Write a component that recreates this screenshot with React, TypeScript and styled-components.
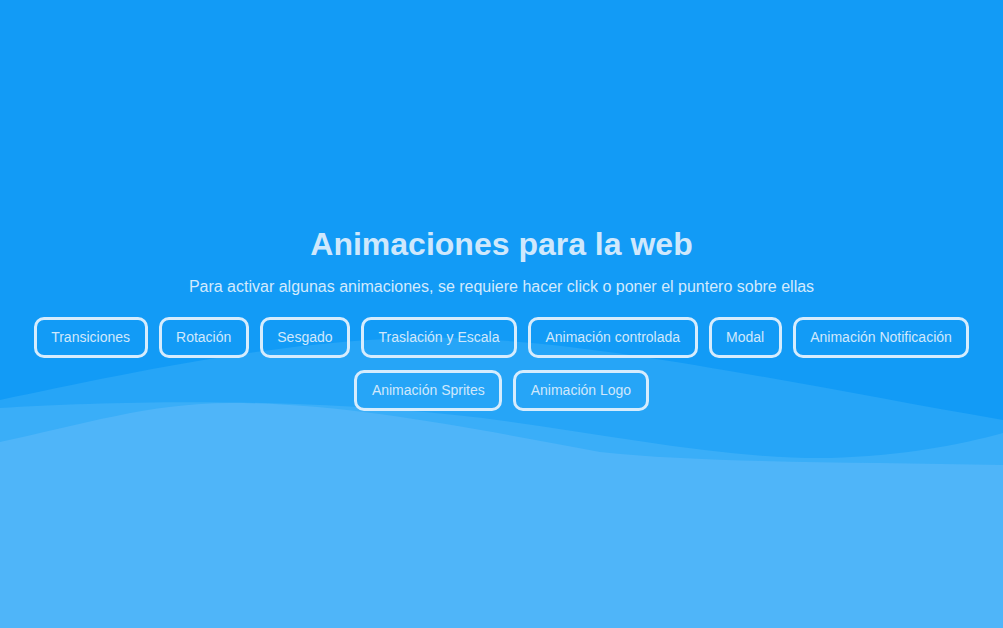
import React from "react";
import styled, { createGlobalStyle } from "styled-components";

const GlobalStyle = createGlobalStyle`
  html, body {
    margin: 0;
    padding: 0;
  }
  body {
    background: #129bf6;
    font-family: "Liberation Sans", Arial, sans-serif;
  }
  * { box-sizing: border-box; }
`;

const Page = styled.main`
  position: relative;
  min-height: 100vh;
  overflow: hidden;
  background: #129bf6;
  display: flex;
  flex-direction: column;
  justify-content: center;
  align-items: center;
  padding-top: 8px;
`;

const Waves = styled.svg`
  position: absolute;
  inset: 0;
  width: 100%;
  height: 100%;
  z-index: 0;
`;

const Content = styled.section`
  position: relative;
  z-index: 1;
  display: flex;
  flex-direction: column;
  align-items: center;
  width: 100%;
`;

const Title = styled.h1`
  margin: 0;
  font-size: 32px;
  line-height: 37px;
  font-weight: 700;
  color: #cfe8fc;
`;

const Subtitle = styled.p`
  margin: 15px 0 0;
  font-size: 16px;
  line-height: 18px;
  color: #d3eafd;
`;

const ButtonRow = styled.nav`
  margin-top: 21px;
  display: flex;
  flex-wrap: wrap;
  justify-content: center;
  column-gap: 11px;
  row-gap: 12px;
  max-width: 1003px;
`;

const NavButton = styled.button`
  font-family: "Liberation Sans", Arial, sans-serif;
  font-size: 14px;
  line-height: 15px;
  height: 41px;
  padding: 10px 14.5px;
  color: #d0e8fc;
  background: transparent;
  border: 3px solid #d6ecfd;
  border-radius: 10px;
  cursor: pointer;
  white-space: nowrap;
`;

const items = [
  "Transiciones",
  "Rotación",
  "Sesgado",
  "Traslación y Escala",
  "Animación controlada",
  "Modal",
  "Animación Notificación",
  "Animación Sprites",
  "Animación Logo",
];

export default function App() {
  return (
    <>
      <GlobalStyle />
      <Page>
        <Waves viewBox="0 0 1003 628" preserveAspectRatio="none" aria-hidden="true">
          <path
            d="M0,400 C120,375 300,335 450,338 C600,341 800,385 1003,420 L1003,628 L0,628 Z"
            fill="#26a5f7"
          />
          <path
            d="M0,408 C100,402 250,398 400,410 C550,420 700,460 830,458 C900,456 960,445 1003,433 L1003,628 L0,628 Z"
            fill="#3aaef8"
          />
          <path
            d="M0,442 C80,425 150,403 230,403 C350,403 480,430 600,452 C700,463 850,462 1003,465 L1003,628 L0,628 Z"
            fill="#4fb5f9"
          />
        </Waves>
        <Content>
          <Title>Animaciones para la web</Title>
          <Subtitle>
            Para activar algunas animaciones, se requiere hacer click o poner el puntero sobre ellas
          </Subtitle>
          <ButtonRow>
            {items.map((label) => (
              <NavButton key={label}>{label}</NavButton>
            ))}
          </ButtonRow>
        </Content>
      </Page>
    </>
  );
}
